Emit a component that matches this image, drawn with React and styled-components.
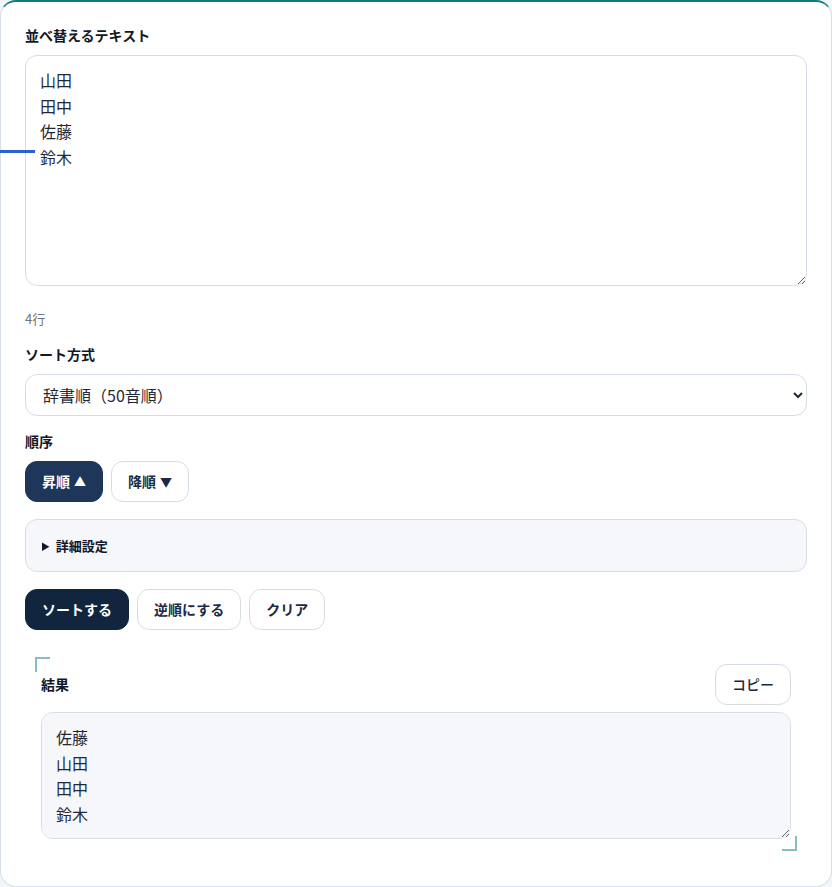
import React, { useState } from "react";
import styled, { createGlobalStyle } from "styled-components";

const GlobalStyle = createGlobalStyle`
  html, body {
    margin: 0;
    padding: 0;
    background: #f2f5f9;
  }
  body {
    font-family: "Noto Sans CJK JP", "Noto Sans", sans-serif;
    color: #111827;
  }
  * { box-sizing: border-box; }
`;

const Card = styled.div`
  position: relative;
  width: 832px;
  height: 887px;
  background: #ffffff;
  border: 1px solid #d7dfe8;
  border-top: 2px solid #117a7e;
  border-radius: 16px;
  padding: 23px 24px 24px 24px;
  display: flex;
  flex-direction: column;
`;

const Marker = styled.span`
  position: absolute;
  left: -1px;
  top: 148px;
  width: 35px;
  height: 3px;
  background: #2b5fd9;
`;

const Label = styled.div`
  font-size: 14px;
  font-weight: 700;
  line-height: 21px;
  color: #111827;
  margin-top: ${(p) => p.$mt || 0}px;
  margin-bottom: 9px;
`;

const TextArea = styled.textarea`
  display: block;
  width: 100%;
  height: ${(p) => p.$h}px;
  padding: 12px 14px;
  font-family: inherit;
  font-size: 16px;
  line-height: 25.6px;
  color: #1f2937;
  background: ${(p) => (p.$muted ? "#f5f7fa" : "#ffffff")};
  border: 1px solid #d5dde7;
  border-radius: 12px;
  outline: none;
  resize: vertical;
`;

const Hint = styled.div`
  margin-top: 24px;
  font-size: 13px;
  line-height: 18px;
  color: #6b7280;
`;

const Select = styled.select`
  display: block;
  width: 100%;
  height: 42px;
  padding: 0 10px 0 13px;
  font-family: inherit;
  font-size: 16px;
  color: #1f2937;
  background: #ffffff;
  border: 1px solid #d5dde7;
  border-radius: 12px;
  outline: none;
`;

const Row = styled.div`
  display: flex;
  gap: 8px;
  align-items: center;
  margin-top: ${(p) => p.$mt || 0}px;
`;

const Button = styled.button`
  font-family: inherit;
  font-size: 14px;
  font-weight: ${(p) => p.$weight || 700};
  line-height: 19px;
  padding: 10px 16px;
  border-radius: 12px;
  cursor: pointer;
  border: 1px solid ${(p) => (p.$variant ? p.$variant : "#d5dde7")};
  background: ${(p) => (p.$variant ? p.$variant : "#ffffff")};
  color: ${(p) => (p.$variant ? "#ffffff" : "#1a2a44")};
`;

const Arrow = styled.span`
  font-size: 12px;
  margin-left: 4px;
`;

const Details = styled.details`
  margin-top: 17px;
  background: #f5f7fa;
  border: 1px solid #d5dde7;
  border-radius: 12px;

  summary {
    padding: 16px 16px;
    font-size: 13px;
    font-weight: 700;
    line-height: 19px;
    color: #111827;
    cursor: pointer;
  }
`;

const Result = styled.div`
  position: relative;
  margin: 27px 10px 0 10px;
  padding: 7px 6px 12px 6px;

  &::before,
  &::after {
    content: "";
    position: absolute;
    width: 13px;
    height: 13px;
    border-color: #86bfc3;
    border-style: solid;
  }
  &::before {
    left: 0;
    top: 0;
    border-width: 2px 0 0 2px;
  }
  &::after {
    right: 0;
    bottom: 0;
    border-width: 0 2px 2px 0;
  }
`;

const ResultHead = styled.div`
  display: flex;
  align-items: center;
  justify-content: space-between;
  margin-bottom: 7px;

  ${Label} {
    margin: 0;
  }
`;

export default function App() {
  const [text, setText] = useState("山田\n田中\n佐藤\n鈴木");
  const [order, setOrder] = useState("asc");
  const result = "佐藤\n山田\n田中\n鈴木";

  return (
    <>
      <GlobalStyle />
      <Card>
        <Marker />
        <Label>並べ替えるテキスト</Label>
        <TextArea $h={231} value={text} onChange={(e) => setText(e.target.value)} />
        <Hint>4行</Hint>

        <Label $mt={16}>ソート方式</Label>
        <Select defaultValue="dict">
          <option value="dict">辞書順（50音順）</option>
          <option value="num">数値順</option>
          <option value="len">文字数順</option>
        </Select>

        <Label $mt={15}>順序</Label>
        <Row>
          <Button $variant={order === "asc" ? "#1d3659" : undefined} onClick={() => setOrder("asc")}>
            昇順<Arrow>▲</Arrow>
          </Button>
          <Button $variant={order === "desc" ? "#1d3659" : undefined} onClick={() => setOrder("desc")}>
            降順<Arrow>▼</Arrow>
          </Button>
        </Row>

        <Details>
          <summary>詳細設定</summary>
        </Details>

        <Row $mt={17}>
          <Button $variant="#11253f">ソートする</Button>
          <Button>逆順にする</Button>
          <Button>クリア</Button>
        </Row>

        <Result>
          <ResultHead>
            <Label>結果</Label>
            <Button $weight={500}>コピー</Button>
          </ResultHead>
          <TextArea $h={127} $muted readOnly value={result} />
        </Result>
      </Card>
    </>
  );
}
